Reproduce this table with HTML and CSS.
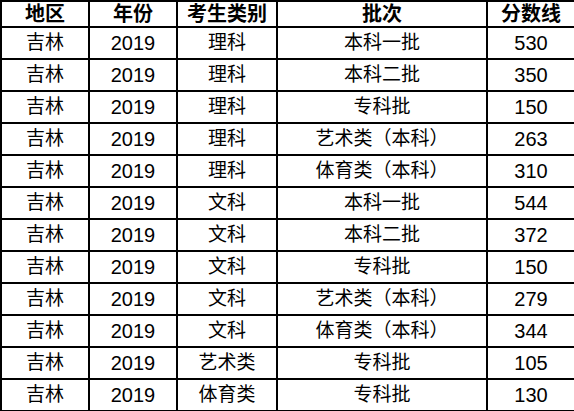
FILE: index.html
```html
<!DOCTYPE html>
<html lang="zh">
<head>
<meta charset="utf-8">
<link rel="stylesheet" href="styles.css">
</head>
<body>
<table class="score-table">
  <colgroup>
    <col class="c1"><col class="c2"><col class="c3"><col class="c4"><col class="c5">
  </colgroup>
  <thead>
    <tr><th>地区</th><th>年份</th><th>考生类别</th><th>批次</th><th>分数线</th></tr>
  </thead>
  <tbody>
    <tr><td>吉林</td><td class="num">2019</td><td>理科</td><td>本科一批</td><td class="num">530</td></tr>
    <tr><td>吉林</td><td class="num">2019</td><td>理科</td><td>本科二批</td><td class="num">350</td></tr>
    <tr><td>吉林</td><td class="num">2019</td><td>理科</td><td>专科批</td><td class="num">150</td></tr>
    <tr><td>吉林</td><td class="num">2019</td><td>理科</td><td>艺术类（本科）</td><td class="num">263</td></tr>
    <tr><td>吉林</td><td class="num">2019</td><td>理科</td><td>体育类（本科）</td><td class="num">310</td></tr>
    <tr><td>吉林</td><td class="num">2019</td><td>文科</td><td>本科一批</td><td class="num">544</td></tr>
    <tr><td>吉林</td><td class="num">2019</td><td>文科</td><td>本科二批</td><td class="num">372</td></tr>
    <tr><td>吉林</td><td class="num">2019</td><td>文科</td><td>专科批</td><td class="num">150</td></tr>
    <tr><td>吉林</td><td class="num">2019</td><td>文科</td><td>艺术类（本科）</td><td class="num">279</td></tr>
    <tr><td>吉林</td><td class="num">2019</td><td>文科</td><td>体育类（本科）</td><td class="num">344</td></tr>
    <tr><td>吉林</td><td class="num">2019</td><td>艺术类</td><td>专科批</td><td class="num">105</td></tr>
    <tr><td>吉林</td><td class="num">2019</td><td>体育类</td><td>专科批</td><td class="num">130</td></tr>
  </tbody>
</table>
</body>
</html>
```
FILE: styles.css
```css
html, body {
  margin: 0;
  padding: 0;
  background: #fff;
}
.score-table {
  border-collapse: collapse;
  table-layout: fixed;
  width: 574px;
  font-family: "Liberation Sans", "Noto Sans CJK SC", sans-serif;
  color: #000;
}
.c1 { width: 88px; }
.c2 { width: 88px; }
.c3 { width: 100px; }
.c4 { width: 210px; }
.c5 { width: 88px; }
.score-table th,
.score-table td {
  border: 2px solid #000;
  text-align: center;
  vertical-align: middle;
  padding: 0;
  white-space: nowrap;
  overflow: hidden;
}
.score-table th {
  height: 24px;
  font-size: 20px;
  font-weight: bold;
  line-height: 22px;
}
.score-table td {
  height: 30px;
  font-size: 19px;
  line-height: 22px;
}
.score-table td.num {
  font-size: 20px;
}
```
